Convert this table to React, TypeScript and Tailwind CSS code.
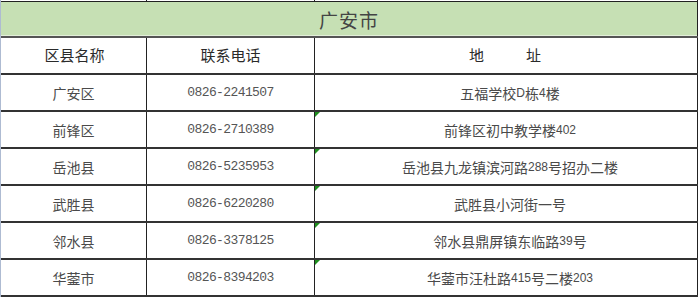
import React from "react";

const rows = [
  { name: "广安区", tel: "0826-2241507", addr: "五福学校D栋4楼", mark: false },
  { name: "前锋区", tel: "0826-2710389", addr: "前锋区初中教学楼402", mark: true },
  { name: "岳池县", tel: "0826-5235953", addr: "岳池县九龙镇滨河路288号招办二楼", mark: true },
  { name: "武胜县", tel: "0826-6220280", addr: "武胜县小河街一号", mark: true },
  { name: "邻水县", tel: "0826-3378125", addr: "邻水县鼎屏镇东临路39号", mark: true },
  { name: "华蓥市", tel: "0826-8394203", addr: "华蓥市汪杜路415号二楼203", mark: true },
];

// split ascii runs so digits get the narrow latin face
function Mixed({ text }: { text: string }) {
  const parts = text.match(/[\x00-\x7f]+|[^\x00-\x7f]+/g) ?? [];
  return (
    <>
      {parts.map((p, i) =>
        /^[\x00-\x7f]+$/.test(p) ? (
          <span key={i} className="font-['Liberation_Sans',sans-serif] text-[12px]">
            {p}
          </span>
        ) : (
          <span key={i}>{p}</span>
        ),
      )}
    </>
  );
}

export default function App() {
  const cjk = "font-['Noto_Sans_CJK_SC',sans-serif]";
  return (
    <div className={`w-[700px] h-[297px] bg-white overflow-hidden flex ${cjk}`}>
      <div className="w-[1px] h-full bg-[#aebbd2]" />
      <div className="w-[697px] flex flex-col">
        {/* row above, clipped */}
        <div className="h-[1px] flex">
          <div className="w-[146px] border-r border-[#222]" />
          <div className="w-[168px] border-r border-[#222]" />
          <div className="w-[383px] border-r border-[#222]" />
        </div>
        <div className="h-[1px] bg-[#222]" />

        {/* title */}
        <div className="h-[33px] bg-[#c6e0b4] border-r border-[#222] flex items-center justify-center pt-[3px] text-[19px] text-[#444] tracking-[1px]">
          广安市
        </div>
        <div className="h-[1px] bg-[#e3efda] border-r border-[#222]" />
        <div className="h-[2px] bg-[#555]" />

        {/* header */}
        <div className="h-[37px] flex border-b-2 border-[#333] text-[15px] text-[#2a2a2a]">
          <div className="w-[146px] border-r border-[#222] flex items-center justify-center pl-[2px]">
            区县名称
          </div>
          <div className="w-[168px] border-r border-[#222] flex items-center justify-center">
            联系电话
          </div>
          <div className="w-[383px] border-r border-[#222] flex items-center justify-center gap-[42px] pr-[2px]">
            <span>地</span>
            <span>址</span>
          </div>
        </div>

        {rows.map((r) => (
          <div
            key={r.name}
            className="h-[37px] flex border-b-2 border-[#333] text-[14px] text-[#4a4a4a]"
          >
            <div className="w-[146px] border-r border-[#222] flex items-center justify-center pt-[1px]">
              {r.name}
            </div>
            <div className="w-[168px] border-r border-[#222] flex items-center justify-center pt-[1px] font-['Liberation_Mono',monospace] text-[13px] tracking-[-0.6px] text-[#555]">
              {r.tel}
            </div>
            <div className="relative w-[383px] border-r border-[#222] flex items-center justify-center pt-[1px] pl-[8px]">
              {r.mark && (
                <svg
                  className="absolute left-0 top-0"
                  width="5"
                  height="5"
                  viewBox="0 0 5 5"
                >
                  <polygon points="0,0 5,0 0,5" fill="#1f8f1f" />
                </svg>
              )}
              <Mixed text={r.addr} />
            </div>
          </div>
        ))}
      </div>
    </div>
  );
}
